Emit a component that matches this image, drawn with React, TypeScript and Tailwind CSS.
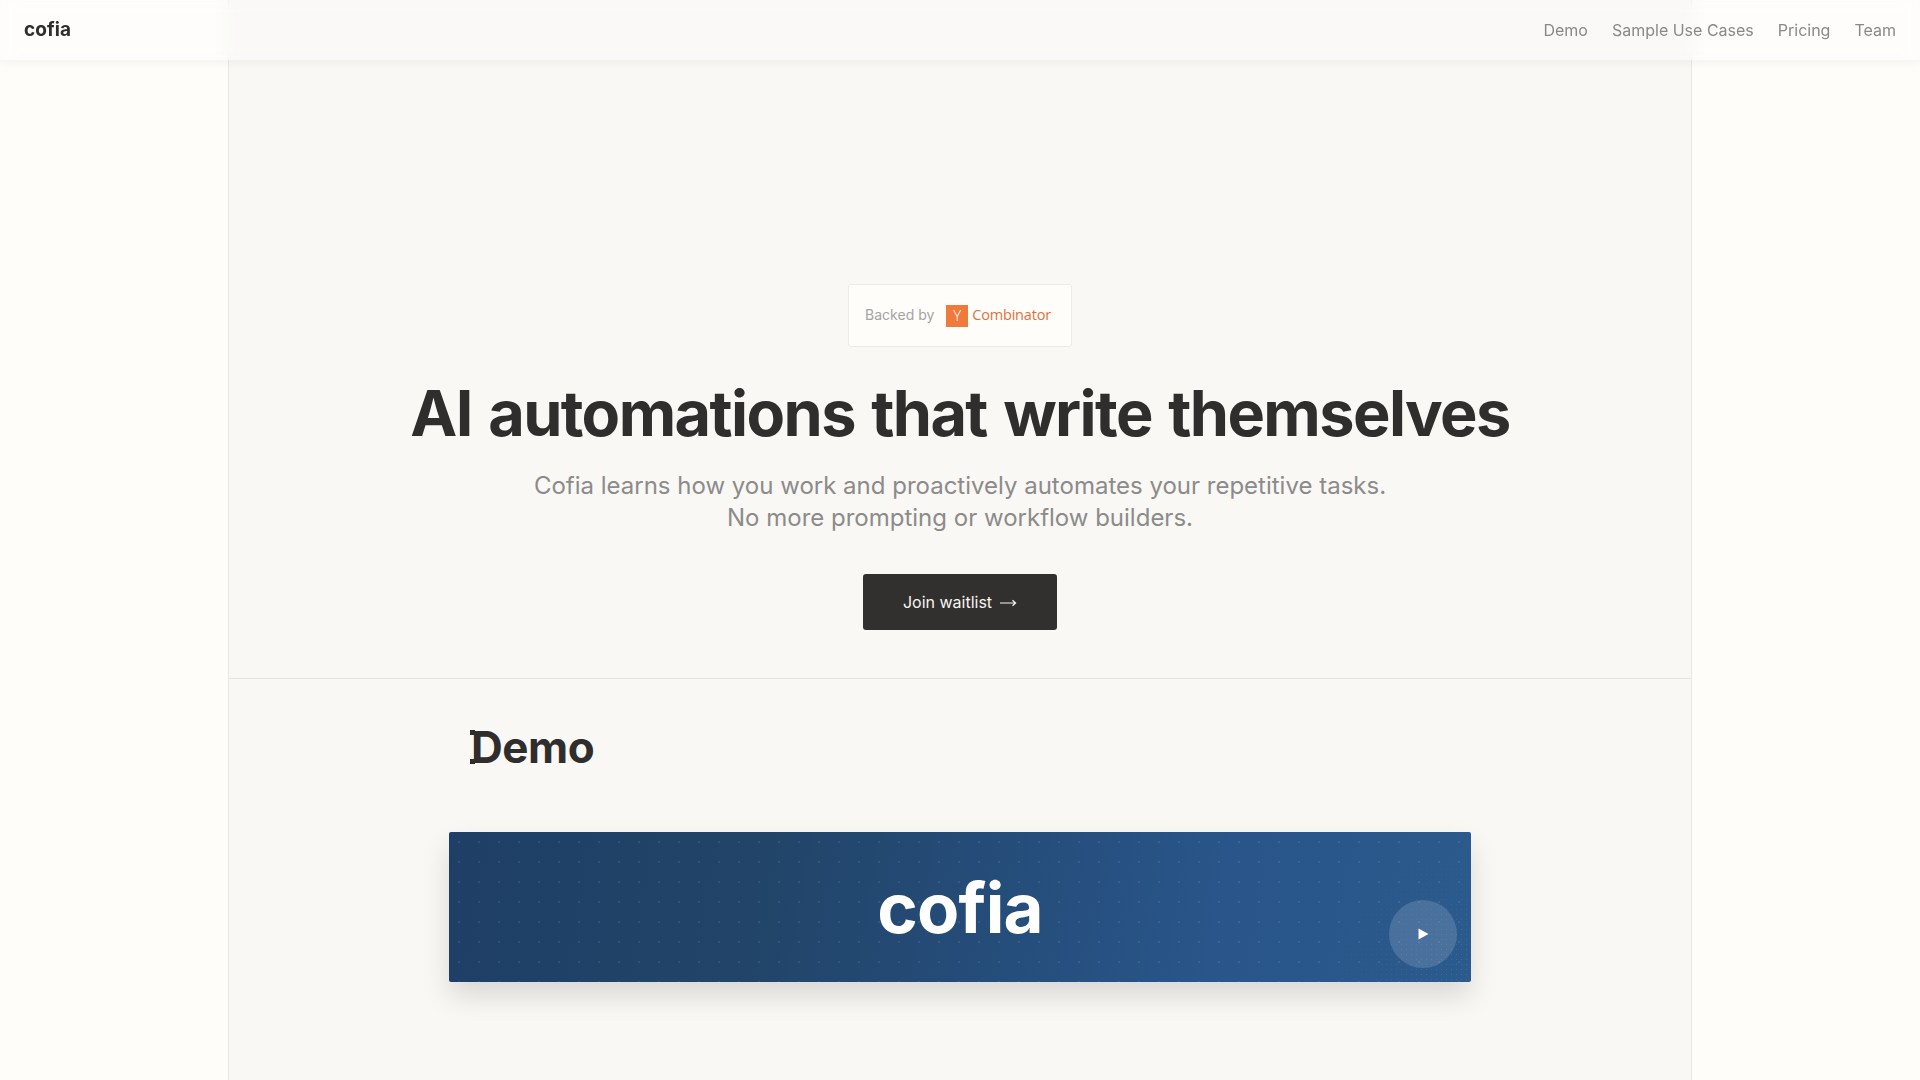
import React from 'react';

const links = ['Demo', 'Sample Use Cases', 'Pricing', 'Team'];

const App: React.FC = () => {
  return (
    <div className="min-h-screen bg-[#fefdfa] font-['Inter',sans-serif] text-[#2f2e2c]">
      {/* Nav */}
      <nav className="fixed top-0 left-0 right-0 z-10 h-[60px] flex items-center justify-between pl-[24px] pr-[24px] bg-white/20 backdrop-blur-sm shadow-[0_2px_10px_rgba(0,0,0,0.05)]">
        <span className="text-[19px] font-bold tracking-[0.05px]">cofia</span>
        <div className="flex items-center gap-[24px]">
          {links.map((link) => (
            <a key={link} className="text-[16px] leading-6 text-[#8b8886]">
              {link}
            </a>
          ))}
        </div>
      </nav>

      {/* Center column */}
      <main className="mx-[228px] min-h-screen bg-[#f9f8f5] border-x border-[#e9e8e5]">
        {/* Hero */}
        <section className="flex flex-col items-center pt-[284px] pb-[48px] border-b border-[#e4e3df]">
          <div className="w-[224px] h-[63px] flex items-center justify-center gap-[12px] pr-[4px] bg-[#fefdfa] border border-[#ecebe8] rounded-[3px]">
            <span className="text-[14px] text-[#a5a4a3] mb-[2px]">Backed by</span>
            <div className="flex items-center gap-[4px]">
              <div className="w-[22px] h-[22px] flex items-center justify-center bg-[#ee7a3c] text-white text-[15px] font-['Open_Sans',sans-serif] font-light leading-none">
                Y
              </div>
              <span className="text-[14.5px] text-[#e2713a] font-['Open_Sans',sans-serif] tracking-[-0.2px] mb-[1px]">Combinator</span>
            </div>
          </div>

          <h1 className="mt-[27px] text-[63px] leading-[78px] font-bold tracking-[-1.6px] [word-spacing:3px] whitespace-nowrap">
            AI automations that write themselves
          </h1>

          <p className="mt-[18px] text-[24px] leading-[32px] text-[#8c8b8a] text-center">
            Cofia learns how you work and proactively automates your repetitive tasks.
            <br />
            No more prompting or workflow builders.
          </p>

          <button className="mt-[40px] w-[194px] h-[56px] flex items-center justify-center gap-[7px] bg-[#32302e] text-[#f7f5f2] text-[16px] rounded-[3px]">
            Join waitlist
            <svg width="18" height="8" viewBox="0 0 18 8" fill="none" stroke="currentColor" strokeWidth="1.2" className="mt-[2px]">
              <path d="M1 4h15.5M13.5 1.2 16.6 4l-3.1 2.8" />
            </svg>
          </button>
        </section>

        {/* Demo */}
        <section className="pt-[41px] pb-[96px]">
          <h2 className="ml-[242px] text-[44px] leading-[54px] font-bold tracking-[-0.5px]">
            <span className="relative before:absolute before:left-[-1px] before:top-[10px] before:h-[5px] before:w-[5px] before:bg-[#2f2e2c] after:absolute after:left-[-1px] after:bottom-[10px] after:h-[5px] after:w-[5px] after:bg-[#2f2e2c]">D</span>
            emo
          </h2>

          <div className="relative mt-[58px] mx-auto w-[1022px] h-[150px] flex items-center justify-center rounded-[2px] overflow-hidden bg-[linear-gradient(100deg,#1f3f66_0%,#214468_30%,#29558a_75%,#2b5a8c_100%)] shadow-[0_14px_28px_rgba(0,0,0,0.13)]">
            <div className="absolute inset-0 bg-[radial-gradient(circle,rgba(255,255,255,0.08)_1px,transparent_1.2px)] bg-[length:20px_20px]" />
            <div className="absolute inset-0 bg-[radial-gradient(circle,rgba(255,255,255,0.12)_0.8px,transparent_1px)] bg-[length:5px_5px] [mask-image:radial-gradient(circle_at_100%_100%,black_0,transparent_150px)]" />
            <span className="relative text-[69px] leading-none font-bold text-white tracking-[-0.8px] mt-[2px]">cofia</span>
            <button className="absolute right-[14px] bottom-[14px] w-[68px] h-[68px] flex items-center justify-center rounded-full bg-white/15">
              <svg width="11" height="12" viewBox="0 0 11 12" fill="white">
                <path d="M0.5 0.5 10.5 6 0.5 11.5Z" />
              </svg>
            </button>
          </div>
        </section>
      </main>
    </div>
  );
};

export default App;
